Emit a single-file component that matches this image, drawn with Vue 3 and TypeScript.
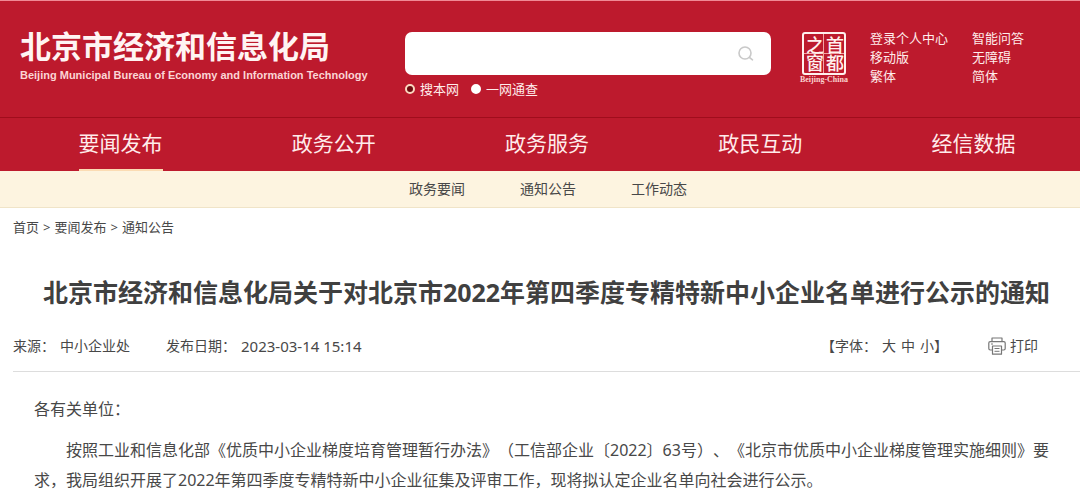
<script setup lang="ts">
import { ref } from 'vue'

const keyword = ref('')
const scope = ref('site')

const scopes = [
  { value: 'site', label: '搜本网' },
  { value: 'all', label: '一网通查' },
]
const quickLinks: string[][] = [
  ['登录个人中心', '移动版', '繁体'],
  ['智能问答', '无障碍', '简体'],
]
const channels = ['要闻发布', '政务公开', '政务服务', '政民互动', '经信数据']
const activeChannel = '要闻发布'
const subChannels = ['政务要闻', '通知公告', '工作动态']
const crumbs = ['首页', '要闻发布', '通知公告']
const fontSizes = ['大', '中', '小']
</script>

<template>
  <div class="page">
    <header class="masthead">
      <div class="brand">
        <div class="brand-name">北京市经济和信息化局</div>
        <div class="brand-en">Beijing Municipal Bureau of Economy and Information Technology</div>
      </div>

      <form class="search" @submit.prevent>
        <div class="search-box">
          <input v-model="keyword" class="search-input" type="text" aria-label="搜索" />
          <button class="search-button" type="submit" aria-label="搜索">
            <svg width="16" height="16" viewBox="0 0 16 16" fill="none" stroke="#c9c9c9" stroke-width="1.6" stroke-linecap="round">
              <circle cx="7" cy="7" r="6" />
              <path d="M11.5 11.5 L14.5 13.8" />
            </svg>
          </button>
        </div>
        <div class="scopes">
          <label v-for="s in scopes" :key="s.value" class="scope">
            <input v-model="scope" class="scope-radio" type="radio" name="scope" :value="s.value" />
            {{ s.label }}
          </label>
        </div>
      </form>

      <a class="emblem" href="#" aria-label="首都之窗">
        <span class="seal">
          <span class="seal-column">之窗</span>
          <span class="seal-column">首都</span>
        </span>
        <span class="emblem-caption">Beijing-China</span>
      </a>

      <div class="quick">
        <ul v-for="(group, i) in quickLinks" :key="i" class="quick-group">
          <li v-for="link in group" :key="link"><a href="#">{{ link }}</a></li>
        </ul>
      </div>
    </header>

    <nav class="channels">
      <a v-for="c in channels" :key="c" href="#" class="channel" :class="{ active: c === activeChannel }">
        <span class="channel-label">{{ c }}</span>
      </a>
    </nav>

    <nav class="sub-channels">
      <a v-for="c in subChannels" :key="c" href="#">{{ c }}</a>
    </nav>

    <main class="content">
      <nav class="crumbs">
        <template v-for="(c, i) in crumbs" :key="c">
          <span v-if="i > 0">&gt;</span>
          <a href="#">{{ c }}</a>
        </template>
      </nav>

      <h1 class="title">北京市经济和信息化局关于对北京市2022年第四季度专精特新中小企业名单进行公示的通知</h1>

      <div class="meta">
        <div class="meta-item"><span>来源：</span><span>中小企业处</span></div>
        <div class="meta-item"><span>发布日期：</span><time class="date" datetime="2023-03-14T15:14">2023-03-14 15:14</time></div>
        <div class="sizes">
          <span>【字体：</span>
          <button v-for="s in fontSizes" :key="s" type="button">{{ s }}</button>
          <span class="bracket">】</span>
        </div>
        <button class="print" type="button">
          <svg width="18" height="18" viewBox="0 0 18 18" fill="none" stroke="#777" stroke-width="1.2" stroke-linejoin="round">
            <path d="M4 4.5V1H14V4.5" />
            <path d="M4.5 13H2.2Q.8 13 .8 11.6V6Q.8 4.6 2.2 4.6H15.8Q17.2 4.6 17.2 6V11.6Q17.2 13 15.8 13H13.5" />
            <rect x="4.5" y="9" width="9" height="8.2" />
            <path d="M3 7H5M6.5 11.5H11.5M6.5 14.3H11.5" stroke-width="1" />
          </svg>
          打印
        </button>
      </div>

      <article class="article">
        <p class="salutation">各有关单位：</p>
        <p class="paragraph">按照工业和信息化部《优质中小企业梯度培育管理暂行办法》（工信部企业〔2022〕63号）、《北京市优质中小企业梯度管理实施细则》要求，我局组织开展了2022年第四季度专精特新中小企业征集及评审工作，现将拟认定企业名单向社会进行公示。</p>
      </article>
    </main>
  </div>
</template>

<style>
body {
  margin: 0;
  background: #fff;
}
</style>

<style scoped>
.page {
  font-family: "Noto Sans", "Noto Sans CJK SC", sans-serif;
  font-size: 14px;
  line-height: 20px;
  color: #484848;
  text-spacing-trim: space-all;
}
a {
  color: inherit;
  text-decoration: none;
}
button {
  padding: 0;
  border: 0;
  background: none;
  font: inherit;
  color: inherit;
  cursor: pointer;
}
.masthead {
  display: flex;
  align-items: flex-start;
  box-sizing: border-box;
  min-height: 117px;
  padding: 28px 56px 0 20px;
  border-top: 1px solid #f08a95;
  background: #bd1a2d;
  color: #ffeceb;
}
.brand {
  flex: none;
  width: 385px;
}
.brand-name {
  font-size: 31px;
  line-height: 34px;
  font-weight: 700;
  white-space: nowrap;
  color: #fff4f3;
}
.brand-en {
  margin-top: 4px;
  font-family: "Liberation Sans", Arial, sans-serif;
  font-size: 11px;
  line-height: 16px;
  font-weight: 700;
  white-space: nowrap;
  color: #fbd5d5;
}
.search {
  flex: 1;
  min-width: 200px;
  padding-top: 3px;
}
.search-box {
  display: flex;
  align-items: center;
  height: 43px;
  padding-right: 17px;
  border-radius: 7px;
  background: #fff;
}
.search-input {
  flex: 1;
  min-width: 0;
  height: 100%;
  box-sizing: border-box;
  padding: 0 12px;
  border: 0;
  outline: 0;
  background: transparent;
  font: inherit;
}
.search-button {
  display: flex;
}
.scopes {
  display: flex;
  gap: 12px;
  margin-top: 4px;
  font-size: 13px;
}
.scope {
  display: flex;
  align-items: center;
  gap: 5px;
}
.scope-radio {
  appearance: none;
  box-sizing: border-box;
  width: 10px;
  height: 10px;
  margin: 0;
  border: 2px solid #fff;
  border-radius: 50%;
  background: #fff;
}
.scope-radio:checked {
  border-color: #fbd9c0;
  background: #6d0a10;
}
.emblem {
  flex: none;
  display: flex;
  flex-direction: column;
  align-items: center;
  width: 50px;
  margin: 3px 0 0 28px;
}
.seal {
  display: grid;
  grid-template-columns: 1fr 1fr;
  box-sizing: border-box;
  width: 44px;
  height: 43px;
  border: 2px solid #fff0ee;
  border-radius: 3px;
  background:
    linear-gradient(#f2a3a4, #f2a3a4) center / 1px 100% no-repeat,
    linear-gradient(#f2a3a4, #f2a3a4) center / 100% 1px no-repeat;
}
.seal-column {
  writing-mode: vertical-rl;
  text-align: center;
  font-size: 18px;
  line-height: 20px;
  font-weight: 500;
  color: #fff0ee;
}
.emblem-caption {
  font-family: "Liberation Serif", serif;
  font-size: 8px;
  line-height: 9px;
  font-weight: 700;
  white-space: nowrap;
  color: #fbd3d0;
}
.quick {
  flex: none;
  display: flex;
  gap: 24px;
  margin-left: 21px;
  font-size: 13px;
  line-height: 19px;
}
.quick-group {
  margin: 0;
  padding: 0;
  list-style: none;
}
.channels {
  display: grid;
  grid-template-columns: repeat(5, 1fr);
  padding-left: 14px;
  border-top: 1px solid #a00d1c;
  background: #bd1a2d;
  color: #ffeceb;
  font-size: 21px;
  line-height: 51px;
  text-align: center;
}
.channel-label {
  display: inline-block;
  border-bottom: 2px solid transparent;
}
.channel.active .channel-label {
  border-bottom-color: #fbdcb4;
}
.sub-channels {
  display: flex;
  justify-content: center;
  gap: 55px;
  padding: 8px 0 8px 16px;
  border-bottom: 1px solid #f0e4c8;
  background: #fdf4e0;
}
.content {
  padding-left: 13px;
}
.crumbs {
  display: flex;
  gap: 4px;
  padding-top: 9px;
  font-size: 13px;
}
.title {
  margin: 37px 0 0;
  font-size: 25px;
  line-height: 36px;
  font-weight: 700;
  text-align: center;
  color: #404040;
}
.meta {
  display: flex;
  align-items: center;
  margin-top: 26px;
  padding: 0 42px 15px 0;
  border-bottom: 1px solid #ddd;
}
.meta-item {
  display: flex;
  gap: 5px;
  margin-right: 36px;
}
.date {
  font-size: 15px;
}
.sizes {
  display: flex;
  gap: 5px;
  margin-left: auto;
}
.bracket {
  margin-left: -5px;
}
.print {
  display: flex;
  align-items: center;
  gap: 4px;
  margin-left: 40px;
}
.article {
  padding: 22px 26px 0 21px;
  font-size: 16px;
  line-height: 30px;
}
.article p {
  margin: 0;
}
.article .paragraph {
  margin-top: 11px;
  text-indent: 2em;
}
</style>
